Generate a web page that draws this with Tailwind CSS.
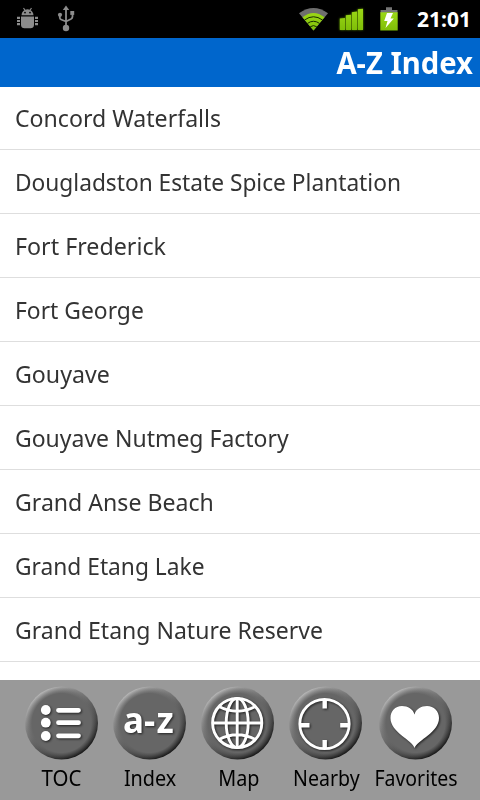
<!DOCTYPE html>
<html lang="en">

<head>
    <meta charset="UTF-8">
    <meta name="viewport" content="width=device-width, initial-scale=1.0">
    <script src="https://cdn.jsdelivr.net/npm/@tailwindcss/browser@4"></script>
    <title>A-Z Index</title>
</head>

<body class="bg-white">
    <div class="flex h-[800px] w-[480px] flex-col overflow-hidden font-['Noto_Sans','Open_Sans',sans-serif]">
        <!-- Status Bar -->
        <div class="flex h-[38px] shrink-0 items-center bg-black pr-[9px] pl-4">
            <svg class="h-[38px] w-[64px]" viewBox="16 0 64 38" fill="#8c8c8c">
                <path d="M21.5 15.300a6 6 0 0 1 12 0z" />
                <path d="M23.500 8l2 3M31.500 8l-2 3" stroke="#8c8c8c" stroke-width="1.2" />
                <circle cx="25" cy="12.600" r=".9" fill="#000" />
                <circle cx="30" cy="12.600" r=".9" fill="#000" />
                <path d="M21 16.500h13v8.500a3.500 3.500 0 0 1-3.500 3.200h-6a3.500 3.500 0 0 1-3.500-3.200z" />
                <path d="M17 17.800h3M17 21h3M17 24.200h3M35 17.800h3M35 21h3M35 24.200h3" stroke="#8c8c8c" stroke-width="2.200" />
                <g fill="none" stroke="#8c8c8c" stroke-width="1.800">
                    <path d="M66 27V9M66 21.500l-5-2q-1.200-.5-1.200-2V15M66 21.500l5-2.500q1.500-.8 1.500-2.500V13" />
                </g>
                <path d="M66 5.500l3.200 4.500h-6.400z" />
                <circle cx="66" cy="28" r="3.200" />
                <circle cx="60" cy="14.800" r="2.100" />
                <path d="M70.300 11h3.900v3.900h-3.900z" />
            </svg>
            <svg class="ml-auto h-[38px] w-[102px] shrink-0" viewBox="298 0 102 38">
                <defs>
                    <linearGradient id="green" x1="0" y1="0" x2="0" y2="1">
                        <stop offset="0" stop-color="#9bd816" />
                        <stop offset="1" stop-color="#7fbe08" />
                    </linearGradient>
                </defs>
                <path d="M313.500 30.500L299 13.300q14.500-10.800 29 0z" fill="#6e6e6e" />
                <path d="M313.500 30.500L302.500 17.300q11-8.800 22 0z" fill="url(#green)" />
                <path d="M304.500 20q9-6.500 18 0M307.300 23.500q6.200-4.500 12.400 0M310.200 26.800q3.300-2.400 6.600 0" fill="none" stroke="#172a00" stroke-width="1" />
                <path d="M339.800 18.600l5.200-.6v12h-5.200zM345.800 15.300l5.200-.6V30h-5.200zM351.800 12.200l5.200-.6V30h-5.200zM357.800 9.300l5.200-.6V30h-5.200z" fill="url(#green)" class="drop-shadow-[0_0_1px_#5a8a00]" />
                <path d="M386 7.200h6v2.800h5.500V13h-17v-3h5.500z" fill="#757575" />
                <path d="M380.300 12.300h17.400v18.200h-17.400z" fill="url(#green)" />
                <path d="M387 13h6l-2.500 5.500h3.300L385.500 28l2-7h-3.300z" fill="#fff" />
            </svg>
            <span class="ml-[17px] w-[54px] text-[21px] leading-none font-bold text-white" id="clock">21:01</span>
        </div>

        <!-- Title -->
        <div class="flex h-[49px] shrink-0 items-center justify-end bg-[#0066cc] pr-[7.5px]">
            <h1 class="origin-right scale-x-[.942] text-[31px] leading-none font-bold text-white">A-Z Index</h1>
        </div>

        <!-- Index List -->
        <ul class="-mt-px flex min-h-0 flex-1 flex-col overflow-hidden text-[24px] text-[#333] *:flex *:h-16 *:shrink-0 *:items-center *:border-b *:border-[#dedede] *:pt-px *:pl-[15px]">
            <li><span class="origin-left scale-x-[.963]">Concord Waterfalls</span></li>
            <li><span class="origin-left scale-x-[.946]">Dougladston Estate Spice Plantation</span></li>
            <li><span class="origin-left scale-x-[.968]">Fort Frederick</span></li>
            <li><span class="origin-left scale-x-[.952]">Fort George</span></li>
            <li><span class="origin-left scale-x-[.965]">Gouyave</span></li>
            <li><span class="origin-left scale-x-[.957]">Gouyave Nutmeg Factory</span></li>
            <li><span class="origin-left scale-x-[.962]">Grand Anse Beach</span></li>
            <li><span class="origin-left scale-x-[.948]">Grand Etang Lake</span></li>
            <li><span class="origin-left scale-x-[.959]">Grand Etang Nature Reserve</span></li>
        </ul>

        <!-- Tab Bar -->
        <nav class="flex h-[120px] shrink-0 bg-[#999] pt-[6px] pl-[17px] text-[22px] leading-[34px] text-black">
            <a class="flex w-[88px] flex-col items-center">
                <svg class="h-[74px] w-[73px]" viewBox="0 0 73 74">
                    <defs>
                        <linearGradient id="rim" x1=".2" y1=".1" x2=".8" y2=".9">
                            <stop offset="0" stop-color="#b4b4b4" />
                            <stop offset=".3" stop-color="#808080" />
                            <stop offset=".65" stop-color="#505050" />
                            <stop offset="1" stop-color="#181818" />
                        </linearGradient>
                        <radialGradient id="face">
                            <stop offset=".82" stop-color="#666" />
                            <stop offset="1" stop-color="#666" stop-opacity="0" />
                        </radialGradient>
                    </defs>
                    <circle cx="36.500" cy="37" r="36.500" fill="url(#rim)" />
                    <circle cx="36.500" cy="37" r="36" fill="url(#face)" />
                    <g class="drop-shadow-[1px_1px_1px_#222]" fill="#fff">
                        <circle cx="20.800" cy="24" r="4.900" />
                        <circle cx="20.800" cy="36.700" r="4.900" />
                        <circle cx="20.800" cy="50" r="4.900" />
                        <path d="M33.500 24.300h20M33.500 36.700h20M33.500 49.800h20" stroke="#fff" stroke-width="4.800" stroke-linecap="round" />
                    </g>
                </svg>
                <span class="scale-x-[.93]">TOC</span>
            </a>
            <a class="flex w-[88px] flex-col items-center">
                <svg class="h-[74px] w-[73px]" viewBox="0 0 73 74">
                    <circle cx="36.500" cy="37" r="36.500" fill="url(#rim)" />
                    <circle cx="36.500" cy="37" r="36" fill="url(#face)" />
                    <text x="10 31 43.500" y="46.500" fill="#fff" class="text-[35px] font-bold drop-shadow-[1px_1px_1px_#222]">a-z</text>
                </svg>
                <span class="ml-[2px] scale-x-[.9]">Index</span>
            </a>
            <a class="flex w-[88px] flex-col items-center">
                <svg class="h-[74px] w-[73px]" viewBox="0 0 73 74">
                    <circle cx="36.500" cy="37" r="36.500" fill="url(#rim)" />
                    <circle cx="36.500" cy="37" r="36" fill="url(#face)" />
                    <g class="drop-shadow-[1px_1px_1px_#222]" fill="none" stroke="#fff" stroke-width="2.900">
                        <circle cx="36.200" cy="37" r="24.600" />
                        <ellipse cx="36.200" cy="37" rx="11" ry="24.600" />
                        <path d="M36.200 12v49.500M12 37h49M18 20.500q18.200 9.500 36.400 0M18 53.500q18.200-9.500 36.400 0" />
                    </g>
                </svg>
                <span class="ml-[3px] scale-x-[.9]">Map</span>
            </a>
            <a class="flex w-[88px] flex-col items-center">
                <svg class="h-[74px] w-[73px]" viewBox="0 0 73 74">
                    <circle cx="36.500" cy="37" r="36.500" fill="url(#rim)" />
                    <circle cx="36.500" cy="37" r="36" fill="url(#face)" />
                    <g class="drop-shadow-[1px_1px_1px_#222]" fill="none" stroke="#fff">
                        <circle cx="35.500" cy="38" r="24.700" stroke-width="2.800" />
                        <path d="M35.700 13v9.500M35.700 54v9M11 39.200h9.500M51.200 39.200H60" stroke-width="4.400" />
                    </g>
                </svg>
                <span class="ml-[2px] scale-x-[.89]">Nearby</span>
            </a>
            <a class="ml-[2px] flex w-[88px] flex-col items-center">
                <svg class="h-[74px] w-[73px]" viewBox="0 0 73 74">
                    <circle cx="36.500" cy="37" r="36.500" fill="url(#rim)" />
                    <circle cx="36.500" cy="37" r="36" fill="url(#face)" />
                    <path d="M35.500 62C33.500 54 11.500 46.500 11.500 32c0-7 4.500-12 11.500-12 6 0 11 3 12.500 8.500 1.500-5.500 6.500-8.500 12.500-8.500 7 0 12 5 12 12 0 14.500-21.500 22-24.500 30z" fill="#fff" class="drop-shadow-[1px_1px_1px_#222]" />
                </svg>
                <span class="ml-px scale-x-[.885]">Favorites</span>
            </a>
        </nav>
    </div>
</body>

</html>
